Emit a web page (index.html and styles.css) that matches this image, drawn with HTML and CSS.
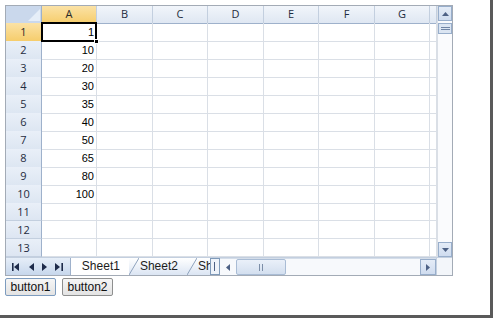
FILE: index.html
```html
<!DOCTYPE html>
<html lang="en">
<head>
    <meta charset="UTF-8">
    <title>Spreadsheet</title>
    <link rel="stylesheet" href="styles.css">
</head>
<body>
    <div class="frame">
        <div class="sheet">
            <div class="top">
                <div class="grid">
                    <div class="row head">
                        <div class="cell corner"><svg width="36" height="17"><polygon points="34,3 34,15 22,15" fill="#e6eef8"/></svg></div>
                        <div class="cell col sel">A</div>
                        <div class="cell col">B</div>
                        <div class="cell col">C</div>
                        <div class="cell col">D</div>
                        <div class="cell col">E</div>
                        <div class="cell col">F</div>
                        <div class="cell col">G</div>
                        <div class="cell col"></div>
                    </div>
                    <div class="row"><div class="cell rh sel">1</div><div class="cell val active">1</div><div class="cell"></div><div class="cell"></div><div class="cell"></div><div class="cell"></div><div class="cell"></div><div class="cell"></div><div class="cell"></div></div>
                    <div class="row"><div class="cell rh">2</div><div class="cell val">10</div><div class="cell"></div><div class="cell"></div><div class="cell"></div><div class="cell"></div><div class="cell"></div><div class="cell"></div><div class="cell"></div></div>
                    <div class="row"><div class="cell rh">3</div><div class="cell val">20</div><div class="cell"></div><div class="cell"></div><div class="cell"></div><div class="cell"></div><div class="cell"></div><div class="cell"></div><div class="cell"></div></div>
                    <div class="row"><div class="cell rh">4</div><div class="cell val">30</div><div class="cell"></div><div class="cell"></div><div class="cell"></div><div class="cell"></div><div class="cell"></div><div class="cell"></div><div class="cell"></div></div>
                    <div class="row"><div class="cell rh">5</div><div class="cell val">35</div><div class="cell"></div><div class="cell"></div><div class="cell"></div><div class="cell"></div><div class="cell"></div><div class="cell"></div><div class="cell"></div></div>
                    <div class="row"><div class="cell rh">6</div><div class="cell val">40</div><div class="cell"></div><div class="cell"></div><div class="cell"></div><div class="cell"></div><div class="cell"></div><div class="cell"></div><div class="cell"></div></div>
                    <div class="row"><div class="cell rh">7</div><div class="cell val">50</div><div class="cell"></div><div class="cell"></div><div class="cell"></div><div class="cell"></div><div class="cell"></div><div class="cell"></div><div class="cell"></div></div>
                    <div class="row"><div class="cell rh">8</div><div class="cell val">65</div><div class="cell"></div><div class="cell"></div><div class="cell"></div><div class="cell"></div><div class="cell"></div><div class="cell"></div><div class="cell"></div></div>
                    <div class="row"><div class="cell rh">9</div><div class="cell val">80</div><div class="cell"></div><div class="cell"></div><div class="cell"></div><div class="cell"></div><div class="cell"></div><div class="cell"></div><div class="cell"></div></div>
                    <div class="row"><div class="cell rh">10</div><div class="cell val">100</div><div class="cell"></div><div class="cell"></div><div class="cell"></div><div class="cell"></div><div class="cell"></div><div class="cell"></div><div class="cell"></div></div>
                    <div class="row"><div class="cell rh">11</div><div class="cell val"></div><div class="cell"></div><div class="cell"></div><div class="cell"></div><div class="cell"></div><div class="cell"></div><div class="cell"></div><div class="cell"></div></div>
                    <div class="row"><div class="cell rh">12</div><div class="cell val"></div><div class="cell"></div><div class="cell"></div><div class="cell"></div><div class="cell"></div><div class="cell"></div><div class="cell"></div><div class="cell"></div></div>
                    <div class="row"><div class="cell rh">13</div><div class="cell val"></div><div class="cell"></div><div class="cell"></div><div class="cell"></div><div class="cell"></div><div class="cell"></div><div class="cell"></div><div class="cell"></div></div>
                </div>
                <div class="vscroll">
                    <div class="sbtn"><svg width="7" height="4"><polygon points="0,4 7,4 3.5,0" fill="#4d6185"/></svg></div>
                    <div class="vsplit"><span></span></div>
                    <div class="vtrack"></div>
                    <div class="sbtn"><svg width="7" height="4"><polygon points="0,0 7,0 3.5,4" fill="#4d6185"/></svg></div>
                </div>
            </div>
            <div class="bottom">
                <div class="nav">
                    <svg width="9" height="8"><rect x="0" y="0" width="1.6" height="8" fill="#1e2b4a"/><polygon points="7,0 7,8 2,4" fill="#1e2b4a"/></svg>
                    <svg width="5" height="8"><polygon points="5,0 5,8 0,4" fill="#1e2b4a"/></svg>
                    <svg width="5" height="8"><polygon points="0,0 0,8 5,4" fill="#1e2b4a"/></svg>
                    <svg width="9" height="8"><polygon points="0,0 0,8 5,4" fill="#1e2b4a"/><rect x="6.4" y="0" width="1.6" height="8" fill="#1e2b4a"/></svg>
                </div>
                <div class="tabs">
                    <span class="tab active">Sheet1</span>
                    <svg class="slant" width="10" height="17"><line x1="0" y1="17" x2="10" y2="0" stroke="#8ea2bd"/></svg>
                    <span class="tab">Sheet2</span>
                    <svg class="slant" width="10" height="17"><line x1="0" y1="17" x2="10" y2="0" stroke="#8ea2bd"/></svg>
                    <span class="tab">Sh</span>
                </div>
                <div class="hsplit"><span></span></div>
                <div class="hscroll">
                    <div class="hbtn"><svg width="4" height="7"><polygon points="4,0 4,7 0,3.5" fill="#4d6185"/></svg></div>
                    <div class="thumb"><span></span><span></span></div>
                    <div class="htrack"></div>
                    <div class="hbtn boxed"><svg width="4" height="7"><polygon points="0,0 0,7 4,3.5" fill="#4d6185"/></svg></div>
                </div>
                <div class="scorner"></div>
            </div>
        </div>
        <div class="buttons">
            <button class="btn focus">button1</button>
            <button class="btn">button2</button>
        </div>
    </div>
</body>
</html>
```

FILE: styles.css
```css
body {
    margin: 0;
    background: #fff;
    font-family: 'Liberation Sans', Arial, sans-serif;
}
.frame {
    width: 493px;
    height: 318px;
    box-sizing: border-box;
    padding: 5px;
    background: #fff;
    border-right: 3px solid #5a5a5a;
    border-bottom: 3px solid #5a5a5a;
}
.sheet {
    width: 448px;
    box-sizing: border-box;
    border: 1px solid #a3abb6;
}
.top {
    display: flex;
}
.grid {
    width: 431px;
    overflow: hidden;
}
.row {
    display: grid;
    grid-template-columns: 36px 55px 56px 55px 56px 55px 56px 55px 7px;
    height: 18px;
}
.row.head {
    height: 17px;
}
.cell {
    box-sizing: border-box;
    border-right: 1px solid #dadfe6;
    border-bottom: 1px solid #dadfe6;
    font-size: 11px;
    line-height: 18px;
    color: #000;
    white-space: nowrap;
}
.head .cell {
    line-height: 16px;
    text-align: center;
    color: #1f2c40;
    font-family: 'Open Sans', sans-serif;
    background: linear-gradient(#f1f5fb, #dfe7f2);
    border-right: 1px solid #c3cfdf;
    border-bottom: 1px solid #9eb1cb;
}
.head .corner {
    background: #cad8ec;
    border-right: 1px solid #9eb1cb;
}
.corner svg {
    display: block;
}
.cell.rh {
    text-align: center;
    color: #1f2c40;
    font-family: 'Open Sans', sans-serif;
    line-height: 17px;
    background: linear-gradient(#e9eff8, #dde6f2);
    border-right: 1px solid #9eb1cb;
    border-bottom: 1px solid #c3cfdf;
}
.head .cell.sel,
.cell.rh.sel {
    background: linear-gradient(#fbe2a6, #f6cd6c);
    color: #2a2a2a;
}
.cell.val {
    text-align: right;
    padding-right: 2px;
}
.cell.active {
    position: relative;
}
.cell.active::after {
    content: '';
    position: absolute;
    left: -1px;
    top: -1px;
    right: -1px;
    bottom: -1px;
    border: 2px solid #000;
}
.cell.active::before {
    content: '';
    position: absolute;
    right: -3px;
    bottom: -3px;
    width: 5px;
    height: 5px;
    background: #000;
    border: 1px solid #fff;
    box-sizing: border-box;
    z-index: 2;
}
.vscroll {
    width: 15px;
    display: flex;
    flex-direction: column;
    border-left: 1px solid #dadfe6;
    box-sizing: border-box;
    background: #fafbfd;
}
.sbtn {
    height: 15px;
    display: flex;
    align-items: center;
    justify-content: center;
    background: linear-gradient(#e4ecf7, #cfdcef);
    border: 1px solid #98aecb;
    box-sizing: border-box;
}
.vsplit {
    height: 9px;
    margin-top: 2px;
    border: 1px solid #98aecb;
    background: #dbe5f2;
    display: flex;
    align-items: center;
    justify-content: center;
}
.vsplit span {
    width: 9px;
    height: 3px;
    border-top: 1px solid #6f84a5;
    border-bottom: 1px solid #6f84a5;
    box-sizing: border-box;
}
.vtrack {
    flex: 1;
}
.bottom {
    display: flex;
    height: 17px;
    border-top: 1px solid #c3cfdf;
    box-sizing: content-box;
}
.nav {
    width: 65px;
    display: flex;
    align-items: center;
    justify-content: space-around;
    padding: 0 2px;
    box-sizing: border-box;
    background: linear-gradient(#e6eef8, #c7d7ec);
    border-right: 1px solid #9eb1cb;
}
.nav svg {
    display: block;
}
.tabs {
    width: 139px;
    overflow: hidden;
    display: flex;
    align-items: center;
    white-space: nowrap;
    background: linear-gradient(#ffffff, #dbe5f3);
}
.tab {
    font-size: 12px;
    line-height: 17px;
    color: #1c1c1c;
    padding: 0 9px 0 1px;
}
.tab.active {
    background: #fff;
    padding: 0 9px 0 11px;
}
.slant {
    display: block;
    flex: none;
}
.hsplit {
    width: 10px;
    box-sizing: border-box;
    border: 1px solid #7f9ab9;
    background: #eef3fa;
    display: flex;
    align-items: center;
    justify-content: center;
}
.hsplit span {
    width: 1px;
    height: 9px;
    background: #4d6185;
}
.hscroll {
    width: 217px;
    display: flex;
    background: #f7f9fc;
    border-top: 1px solid #d4dde9;
    box-sizing: border-box;
}
.hbtn {
    width: 16px;
    display: flex;
    align-items: center;
    justify-content: center;
    box-sizing: border-box;
}
.hbtn.boxed {
    background: linear-gradient(#e4ecf7, #cfdcef);
    border: 1px solid #98aecb;
}
.thumb {
    width: 50px;
    box-sizing: border-box;
    border: 1px solid #a9bcd5;
    border-radius: 2px;
    background: linear-gradient(#eaf0f9, #d3dfef);
    display: flex;
    align-items: center;
    justify-content: center;
    gap: 2px;
}
.thumb span {
    width: 1px;
    height: 7px;
    background: #7c8ea8;
}
.htrack {
    flex: 1;
}
.scorner {
    width: 15px;
    background: #f3f6fa;
    border-left: 1px solid #c3cfdf;
}
.buttons {
    display: flex;
    gap: 6px;
    margin-top: 2px;
}
.btn {
    width: 51px;
    height: 18px;
    padding: 0;
    font-family: 'Liberation Sans', Arial, sans-serif;
    font-size: 12px;
    color: #111;
    background: linear-gradient(#f6f6f6, #e3e3e3);
    border: 1px solid #8e8f8f;
    border-radius: 2px;
}
.btn.focus {
    border-color: #7d9cbf;
}
```
